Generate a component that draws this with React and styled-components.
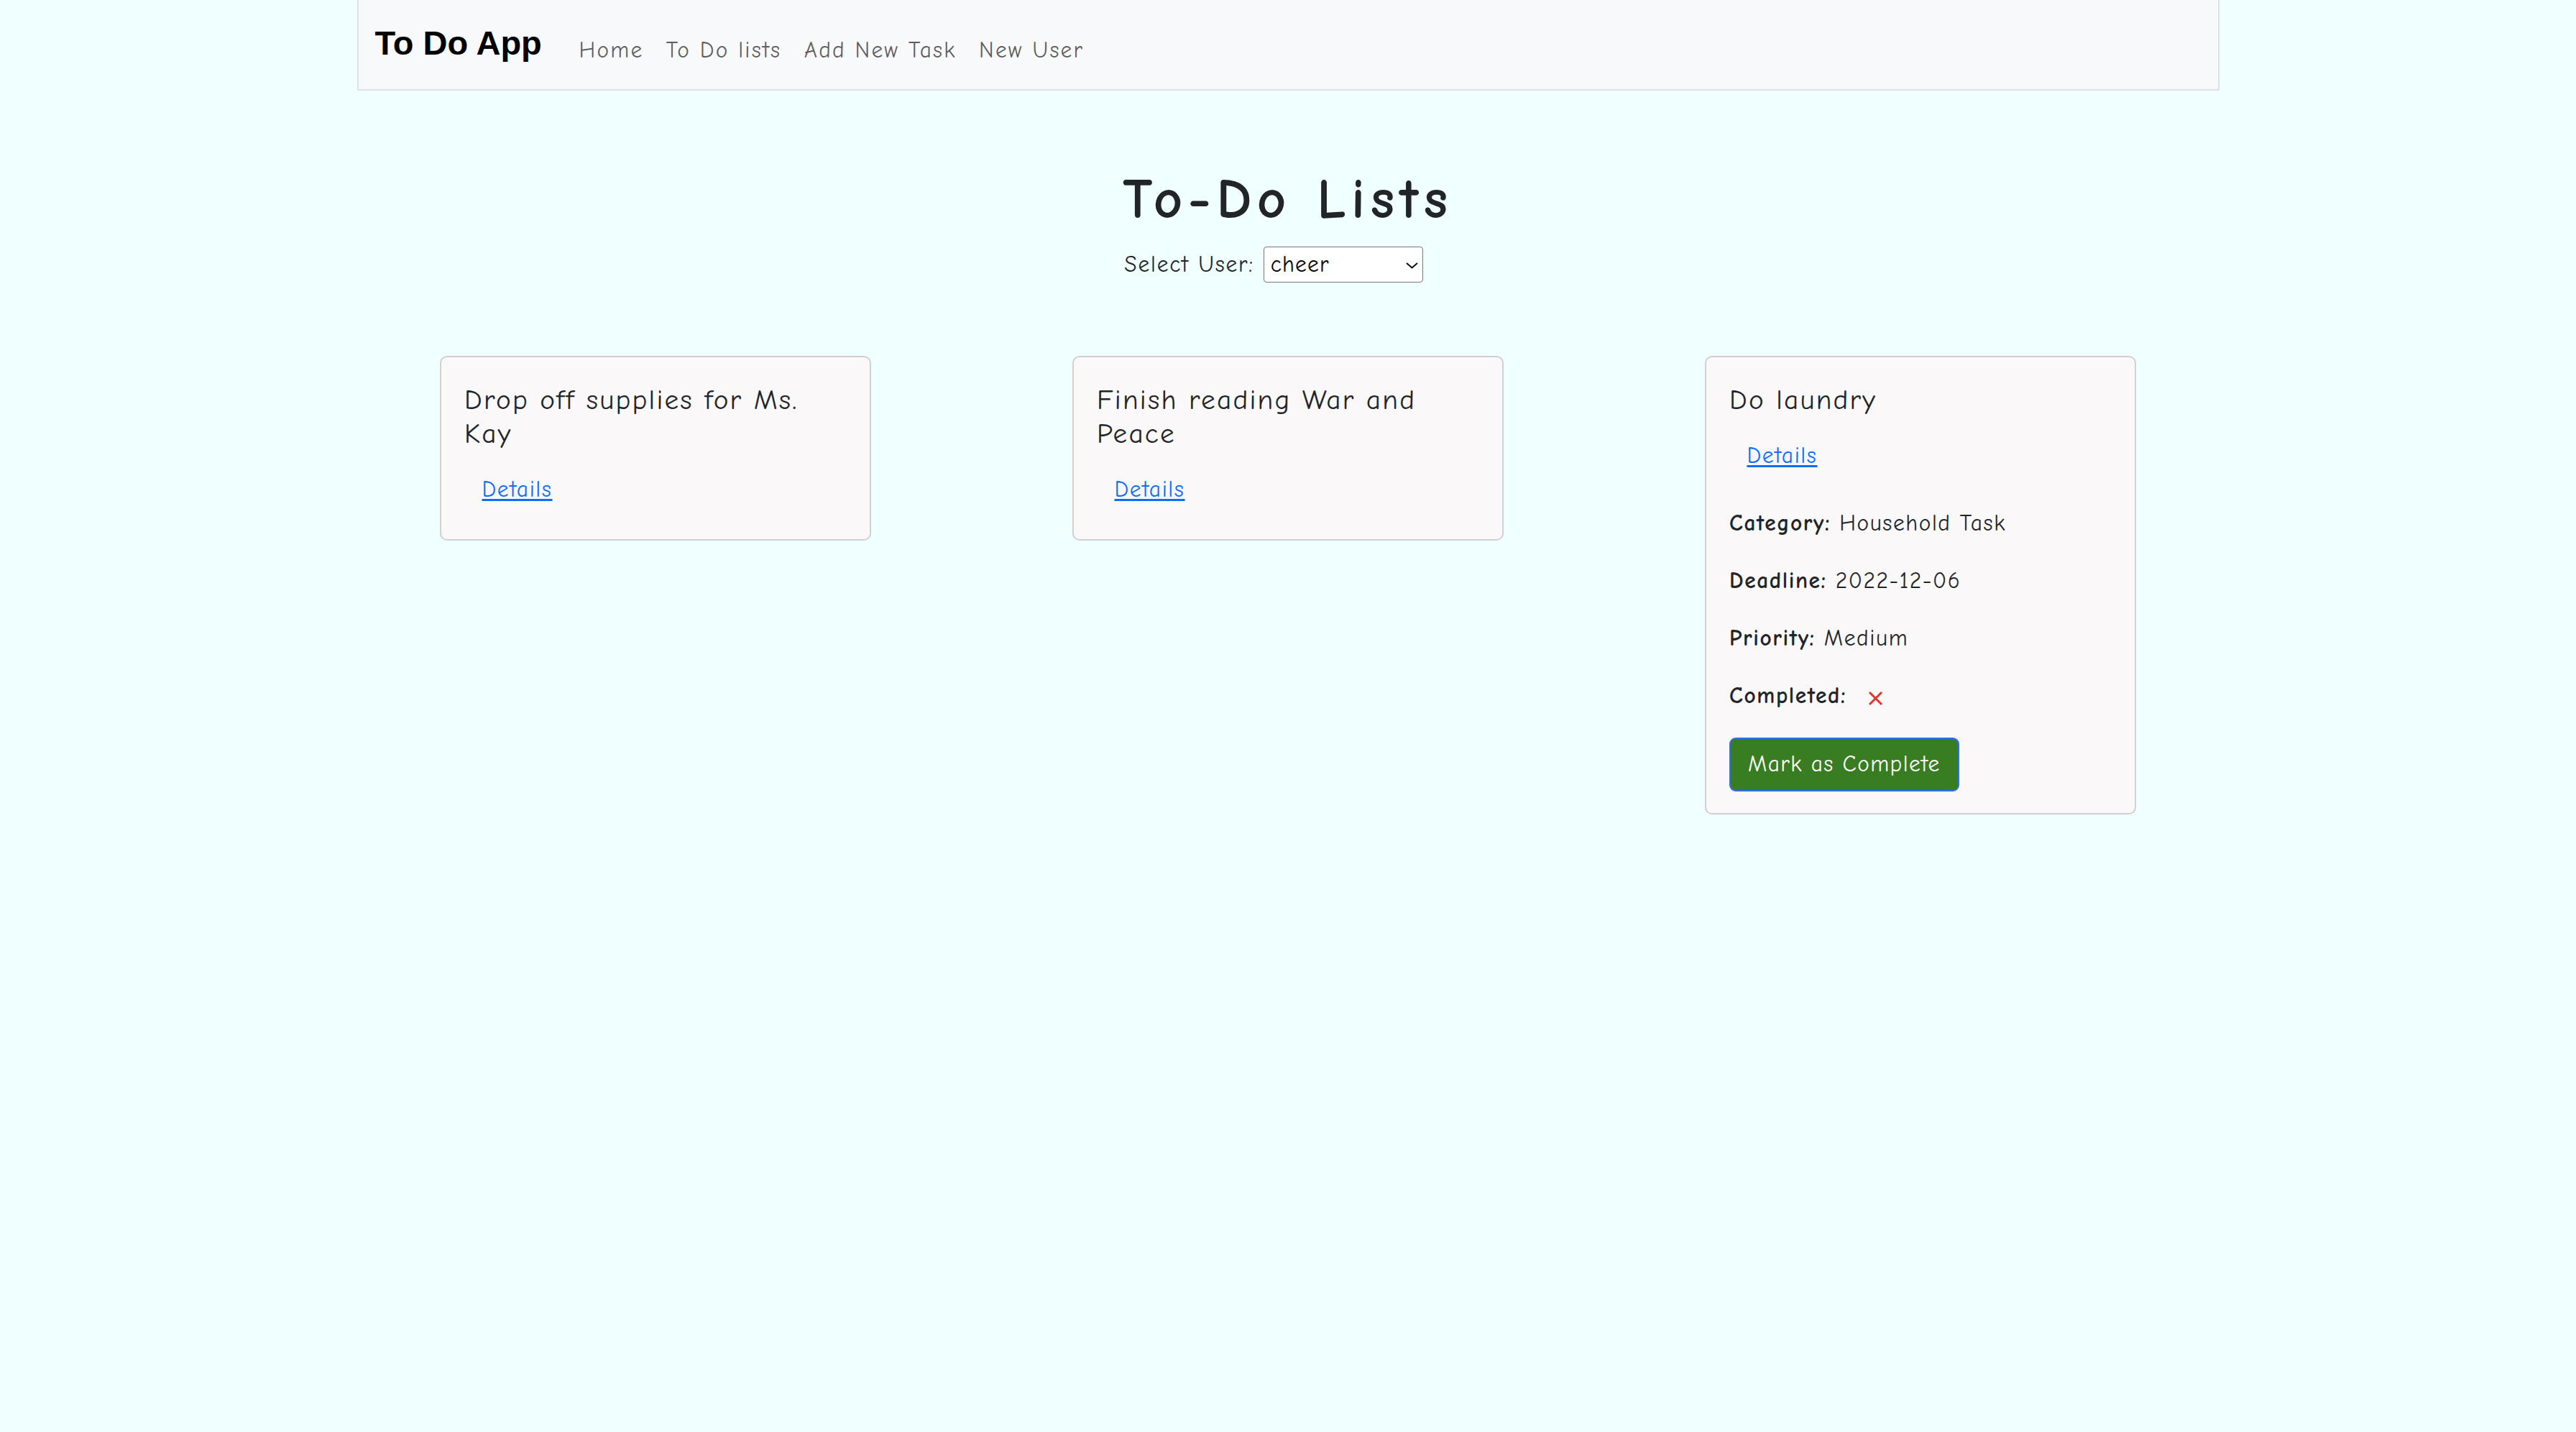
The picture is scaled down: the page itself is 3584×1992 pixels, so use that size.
import React from "react";
import styled, { createGlobalStyle } from "styled-components";

const FONT = `"Comic Sans MS", "Comic Neue", "Noto Sans", sans-serif`;

const GlobalStyle = createGlobalStyle`
  *, *::before, *::after { box-sizing: border-box; }
  html, body { margin: 0; padding: 0; background: #f0ffff; }
  body {
    font-family: ${FONT};
    font-size: 31.4px;
    line-height: 1.5;
    color: #212529;
    min-height: 1992px;
  }
`;

const Page = styled.div`
  min-height: 1992px;
  background: #f0ffff;
`;

const Navbar = styled.nav`
  width: 2591px;
  height: 126px;
  margin: 0 auto;
  background: #f8f9fa;
  border: 2px solid #dee2e6;
  border-top: 0;
  display: flex;
  align-items: flex-start;
  padding: 25px 23px 0;
`;

const Brand = styled.a`
  font-family: "Liberation Sans", Arial, sans-serif;
  font-weight: 700;
  font-size: 47px;
  line-height: 70px;
  color: #000;
  text-decoration: none;
  margin-right: 36px;
  white-space: nowrap;
`;

const NavList = styled.ul`
  display: flex;
  list-style: none;
  margin: 22px 0 0;
  padding: 0;
`;

const NavLink = styled.a`
  display: block;
  padding: 0 15.7px;
  line-height: 47px;
  font-size: 31.4px;
  letter-spacing: 2.2px;
  color: rgba(0, 0, 0, 0.64);
  text-decoration: none;
  white-space: nowrap;
`;

const Main = styled.main`
  display: flex;
  flex-direction: column;
  align-items: center;
`;

const Title = styled.h1`
  margin: 105px 0 0;
  font-size: 78.5px;
  font-weight: 700;
  line-height: 94px;
  letter-spacing: 7.5px;
  color: #212529;
`;

const UserRow = styled.div`
  display: flex;
  align-items: center;
  gap: 13px;
  margin-top: 18px;
  height: 50px;
  padding-right: 40px;
`;

const Label = styled.label`
  line-height: 47px;
  letter-spacing: 1.8px;
  color: #212529;
`;

const SelectWrap = styled.span`
  position: relative;
  display: inline-block;
  width: 222px;
  height: 50px;
`;

const Select = styled.select`
  appearance: none;
  -webkit-appearance: none;
  width: 100%;
  height: 100%;
  border: 1px solid #767676;
  border-radius: 4px;
  background: #fff;
  font-family: ${FONT};
  font-size: 31.4px;
  line-height: 48px;
  letter-spacing: 1.2px;
  padding: 0 40px 0 9px;
  color: #000;
  outline: none;
`;

const Chevron = styled.svg`
  position: absolute;
  left: 198px;
  top: 22px;
  pointer-events: none;
`;

const CardRow = styled.div`
  display: flex;
  justify-content: center;
  align-items: flex-start;
  gap: 280px;
  margin-top: 102px;
  width: 100%;
`;

const Card = styled.div`
  width: 600px;
  background: #faf8f9;
  border: 2px solid #d3cfcf;
  border-radius: 10px;
  padding: 36px 32px 30px;
`;

const CardTitle = styled.h5`
  margin: 0 0 15px;
  font-size: 39.25px;
  font-weight: 400;
  line-height: 47px;
  letter-spacing: 2.2px;
  color: #212529;
`;

const DetailsLink = styled.a`
  display: inline-block;
  padding: 14.7px 23.5px;
  border: 1px solid transparent;
  line-height: 47px;
  font-size: 31.4px;
  letter-spacing: 1.6px;
  color: #0d6efd;
  text-decoration: underline;
  text-underline-offset: 3px;
`;

const InfoList = styled.div`
  margin-top: 32px;
`;

const InfoRow = styled.p`
  margin: 0 0 33px;
  line-height: 47px;
  letter-spacing: 1.6px;
`;

const Key = styled.strong`
  font-weight: 700;
`;

const XMark = styled.svg`
  margin-left: 18px;
  vertical-align: -4px;
`;

const CompleteButton = styled.button`
  display: inline-block;
  margin-top: 1px;
  padding: 12px 24px;
  border: 2px solid #2f6ff0;
  border-radius: 9px;
  background: #387d22;
  color: #fff;
  font-family: ${FONT};
  font-size: 31.4px;
  line-height: 47px;
  letter-spacing: 1.4px;
  cursor: pointer;
`;

const tasks = [
  { id: 1, title: "Drop off supplies for Ms. Kay", open: false },
  { id: 2, title: "Finish reading War and Peace", open: false },
  {
    id: 3,
    title: "Do laundry",
    open: true,
    category: "Household Task",
    deadline: "2022-12-06",
    priority: "Medium",
    completed: false,
  },
];

function TaskCard({ task }) {
  return (
    <Card>
      <CardTitle>{task.title}</CardTitle>
      <DetailsLink href="#">Details</DetailsLink>
      {task.open && (
        <>
          <InfoList>
            <InfoRow>
              <Key>Category:</Key> {task.category}
            </InfoRow>
            <InfoRow>
              <Key>Deadline:</Key> {task.deadline}
            </InfoRow>
            <InfoRow>
              <Key>Priority:</Key> {task.priority}
            </InfoRow>
            <InfoRow>
              <Key>Completed:</Key>{" "}
              <XMark width="21" height="21" viewBox="0 0 21 21">
                <line x1="2" y1="2" x2="19" y2="19" stroke="#e3342a" strokeWidth="3" />
                <line x1="19" y1="2" x2="2" y2="19" stroke="#e3342a" strokeWidth="3" />
              </XMark>
            </InfoRow>
          </InfoList>
          <CompleteButton type="button">Mark as Complete</CompleteButton>
        </>
      )}
    </Card>
  );
}

export default function App() {
  return (
    <Page>
      <GlobalStyle />
      <Navbar>
        <Brand href="#">To Do App</Brand>
        <NavList>
          <li><NavLink href="#">Home</NavLink></li>
          <li><NavLink href="#">To Do lists</NavLink></li>
          <li><NavLink href="#">Add New Task</NavLink></li>
          <li><NavLink href="#">New User</NavLink></li>
        </NavList>
      </Navbar>
      <Main>
        <Title>To-Do Lists</Title>
        <UserRow>
          <Label htmlFor="user">Select User:</Label>
          <SelectWrap>
            <Select id="user" defaultValue="cheer">
              <option value="cheer">cheer</option>
              <option value="alex">alex</option>
              <option value="sam">sam</option>
            </Select>
            <Chevron width="17" height="9" viewBox="0 0 17 9">
              <polyline points="1,1 8.5,7.5 16,1" fill="none" stroke="#000" strokeWidth="1.8" />
            </Chevron>
          </SelectWrap>
        </UserRow>
        <CardRow>
          {tasks.map((t) => (
            <TaskCard key={t.id} task={t} />
          ))}
        </CardRow>
      </Main>
    </Page>
  );
}
